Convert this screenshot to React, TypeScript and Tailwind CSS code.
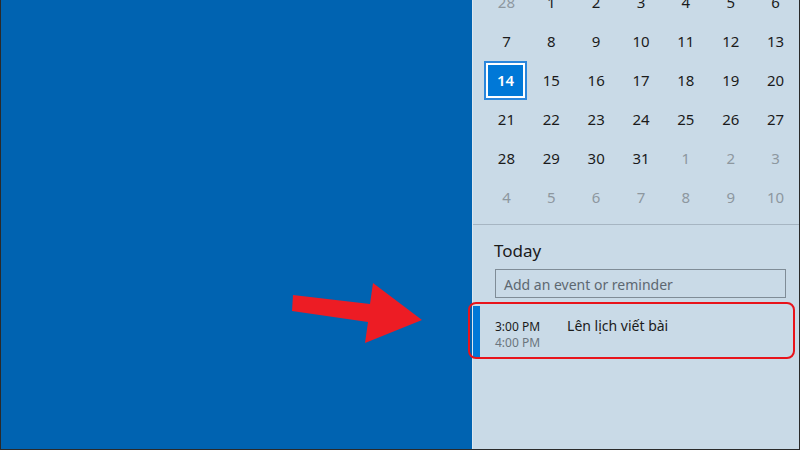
const rows: { d: number; dim?: boolean }[][] = [
  [{ d: 28, dim: true }, { d: 1 }, { d: 2 }, { d: 3 }, { d: 4 }, { d: 5 }, { d: 6 }],
  [{ d: 7 }, { d: 8 }, { d: 9 }, { d: 10 }, { d: 11 }, { d: 12 }, { d: 13 }],
  [{ d: 14 }, { d: 15 }, { d: 16 }, { d: 17 }, { d: 18 }, { d: 19 }, { d: 20 }],
  [{ d: 21 }, { d: 22 }, { d: 23 }, { d: 24 }, { d: 25 }, { d: 26 }, { d: 27 }],
  [{ d: 28 }, { d: 29 }, { d: 30 }, { d: 31 }, { d: 1, dim: true }, { d: 2, dim: true }, { d: 3, dim: true }],
  [
    { d: 4, dim: true },
    { d: 5, dim: true },
    { d: 6, dim: true },
    { d: 7, dim: true },
    { d: 8, dim: true },
    { d: 9, dim: true },
    { d: 10, dim: true },
  ],
];

function DayCell({ d, dim, today }: { d: number; dim?: boolean; today?: boolean }) {
  if (today) {
    return (
      <div className="flex h-[39px] items-center">
        <div className="h-[39px] w-[43px] border-2 border-[#2a86dc]">
          <div className="flex h-full w-full items-center justify-center border-2 border-white bg-[#0078d7] text-[15px] font-semibold text-white">
            {d}
          </div>
        </div>
      </div>
    );
  }
  return (
    <div
      className={`flex h-[39px] items-center justify-center text-[15px] ${
        dim ? "text-[#8d979f]" : "text-[#1b1b1b]"
      }`}
    >
      {d}
    </div>
  );
}

export default function App() {
  return (
    <div className="relative flex h-[450px] w-[800px] overflow-hidden border-x border-b border-[#2a2a2a] font-['Noto_Sans',sans-serif]">
      {/* Desktop */}
      <div className="flex-1 bg-[#0063b1]" />

      {/* Calendar flyout */}
      <div className="flex w-[327px] flex-col border-l border-[#dce7f0] bg-[#c9dae7]">
        <div className="mt-[-17px] grid grid-cols-7 pl-[11px] pr-px">
          {rows.map((row, r) =>
            row.map((c, i) => (
              <DayCell key={`${r}-${i}`} d={c.d} dim={c.dim} today={r === 2 && i === 0} />
            ))
          )}
        </div>

        <div className="mt-[7px] h-px bg-[#a6b5c2]" />

        <div className="mt-[14px] pl-[21px] text-[17px] leading-6 text-[#1b1b1b]">Today</div>

        <div className="ml-[22px] mt-[6px] flex h-[29px] w-[291px] items-center border border-[#7f8c97] px-2 pt-px text-[14px] text-[#5d6871]">
          Add an event or reminder
        </div>

        <div className="mt-2 flex h-[52px]">
          <div className="w-[7px] bg-[#0078d7]" />
          <div className="flex flex-col pl-[15px] pt-[13px] text-[12px] leading-4">
            <span className="text-[#1b1b1b]">3:00 PM</span>
            <span className="text-[#6b757d]">4:00 PM</span>
          </div>
          <div className="pl-[27px] pt-[10px] text-[14px] leading-5 text-[#1b1b1b]">Lên lịch viết bài</div>
        </div>
      </div>

      {/* Annotation: highlight box */}
      <div className="absolute left-[467px] top-[302px] h-[57px] w-[327px] rounded-[8px] border-2 border-[#e8131b]" />

      {/* Annotation: arrow */}
      <svg className="absolute left-0 top-0" width="800" height="450" viewBox="0 0 800 450">
        <polygon
          points="292,295 369,304 372,283 421,320 364,343 367,322 291,311"
          fill="#ed1c24"
        />
      </svg>
    </div>
  );
}
